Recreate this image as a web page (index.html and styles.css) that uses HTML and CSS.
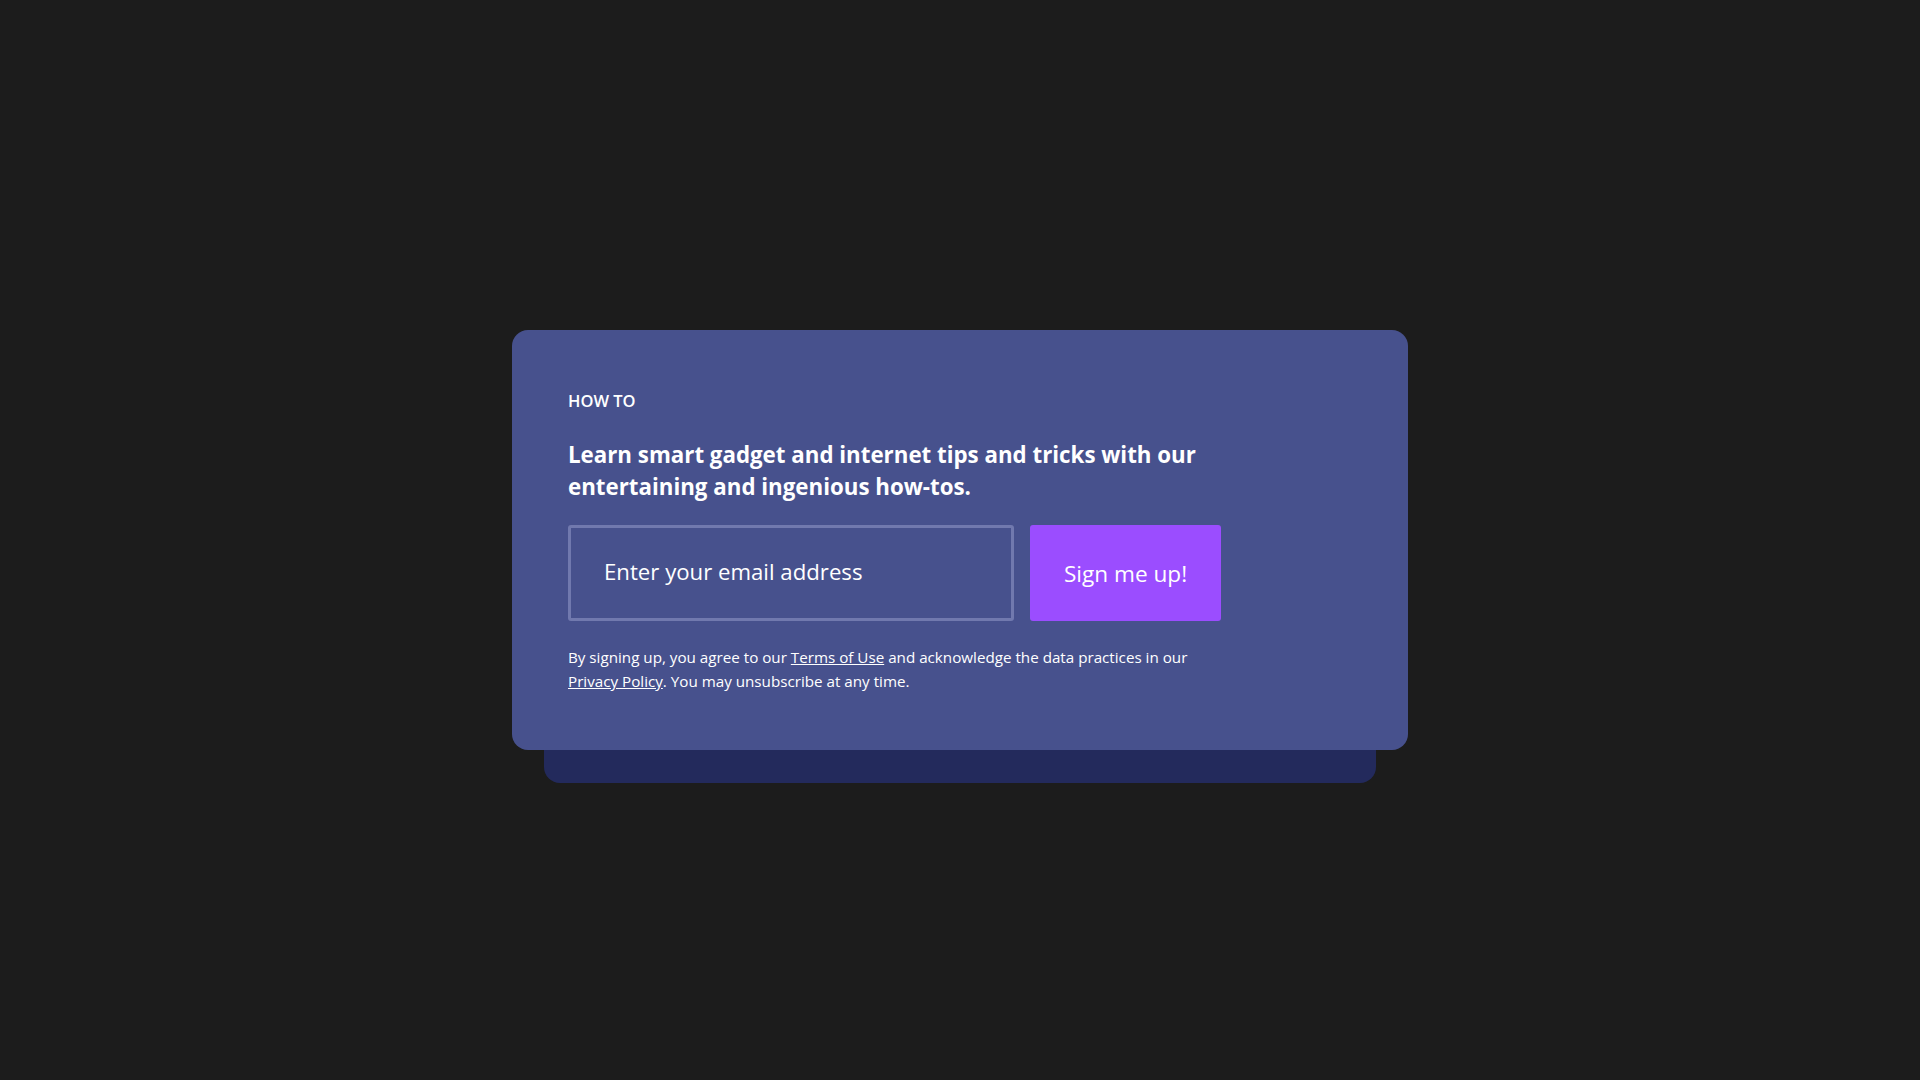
FILE: index.html
```html
<!DOCTYPE html>
<html lang="en">
<head>
<meta charset="utf-8">
<title>How To Newsletter</title>
<link rel="stylesheet" href="styles.css">
</head>
<body>
<main class="page">
  <section class="signup">
    <div class="signup-inner">
      <p class="eyebrow">HOW TO</p>
      <h2 class="headline">Learn smart gadget and internet tips and tricks with our entertaining and ingenious how-tos.</h2>
      <form class="form">
        <input class="email" type="email" placeholder="Enter your email address">
        <button class="submit" type="button">Sign me up!</button>
      </form>
      <p class="legal">By signing up, you agree to our <a href="#">Terms of Use</a> and acknowledge the data practices in our <a href="#">Privacy Policy</a>. You may unsubscribe at any time.</p>
    </div>
  </section>
</main>
</body>
</html>
```
FILE: styles.css
```css
* { box-sizing: border-box; }
html, body { margin: 0; padding: 0; }
body {
  background: #1c1c1c;
  font-family: "Open Sans", "Noto Sans", sans-serif;
  color: #fff;
}
.page {
  min-height: 100vh;
  display: flex;
  align-items: center;
  justify-content: center;
}
.signup {
  position: relative;
  width: 896px;
  background: #47518d;
  border-radius: 16px;
  padding: 59px 56px 57px;
}
.signup::before {
  content: "";
  position: absolute;
  left: 32px;
  right: 32px;
  top: 32px;
  bottom: -33px;
  background: #232a5c;
  border-radius: 16px;
  z-index: -1;
}
.signup-inner { width: 660px; }
.eyebrow {
  margin: 0;
  font-size: 16.5px;
  line-height: 24px;
  font-weight: 600;
}
.headline {
  margin: 26px 0 22px;
  font-size: 22.3px;
  line-height: 32px;
  font-weight: 700;
}
.form {
  display: flex;
  gap: 16px;
  margin: 0 0 24px;
}
.email {
  width: 446px;
  height: 96px;
  background: transparent;
  border: 3px solid #7179ae;
  border-radius: 3px;
  padding: 0 0 4px 33px;
  font-family: inherit;
  font-size: 22.2px;
  color: #fff;
}
.email::placeholder { color: #fff; opacity: 1; }
.submit {
  width: 191px;
  height: 96px;
  border: 0;
  border-radius: 3px;
  background: #9b4dff;
  color: #fff;
  font-family: inherit;
  font-size: 22.6px;
  padding: 0;
}
.legal {
  margin: 0;
  font-size: 15.2px;
  line-height: 24px;
}
.legal a { color: #fff; }
```
